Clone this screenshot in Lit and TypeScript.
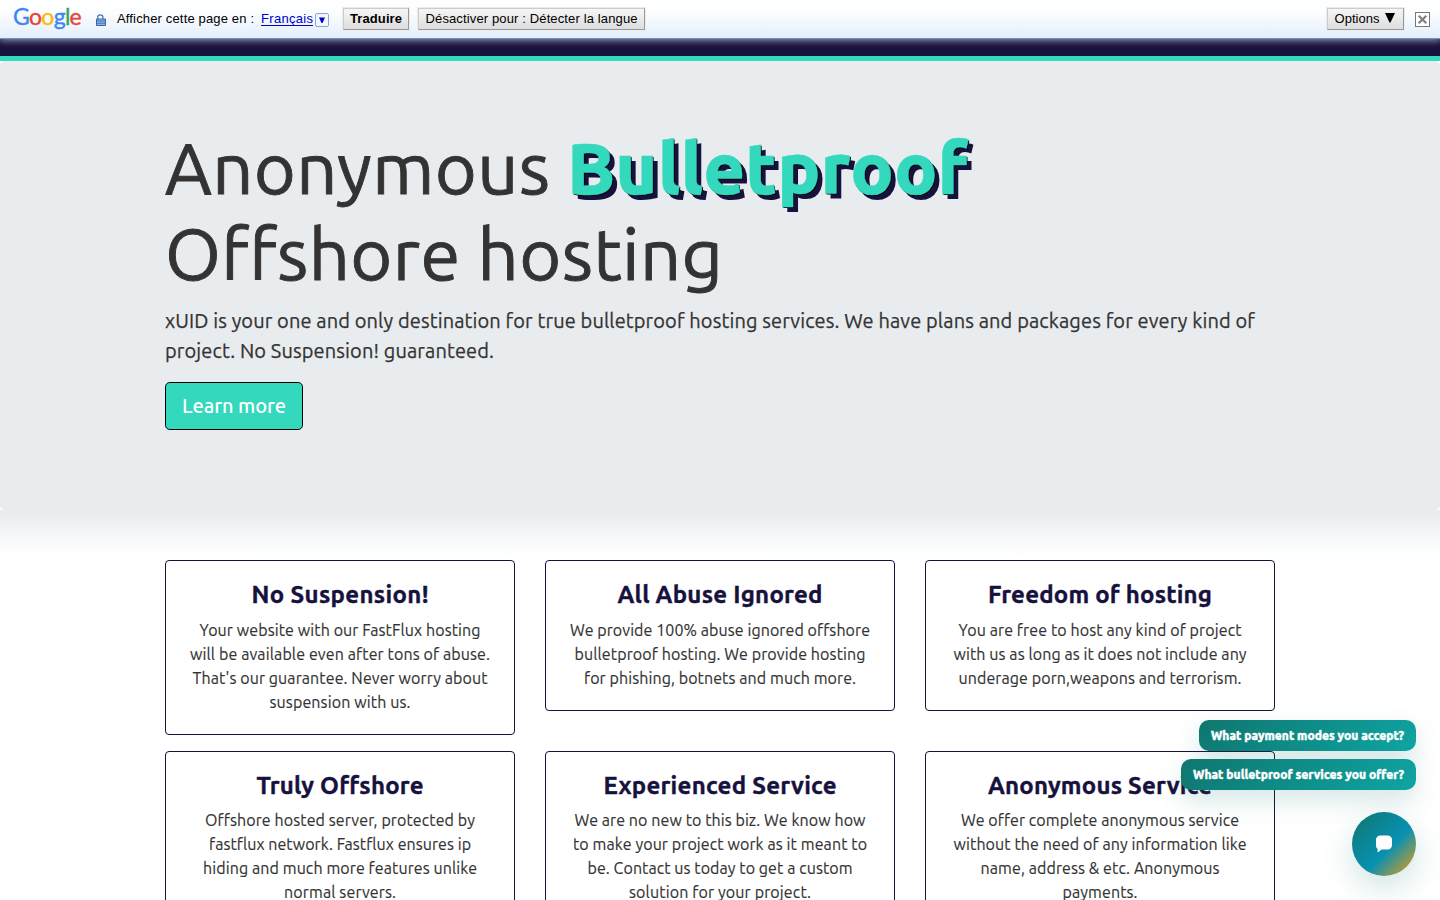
import { LitElement, html, css } from "lit";
import { customElement, property, state } from "lit/decorators.js";

/** A single line of text whose tracking is adjusted so that it spans `w` pixels. */
@customElement("fit-text")
class FitText extends LitElement {
  @property() text = "";
  @property({ type: Number }) w = 0;
  @state() spacing = 0;
  static styles = css`
    :host { display: inline-block; white-space: pre; }
    .box { display: inline-block; }
  `;
  firstUpdated() {
    const span = this.renderRoot.querySelector(".run") as HTMLElement;
    const natural = span.getBoundingClientRect().width;
    this.spacing = (this.w - natural) / Math.max(1, this.text.length - 1);
  }
  render() {
    return html`<span class="box" style="width:${this.w}px"><span class="run" style="letter-spacing:${this.spacing}px">${this.text}</span></span>`;
  }
}

type Line = [string, number];
const fit = (l: Line) => html`<fit-text .text=${l[0]} .w=${l[1]}></fit-text>`;

const cards: { title: Line; lines: Line[] }[] = [
  { title: ["No Suspension!", 177], lines: [["Your website with our FastFlux hosting", 281], ["will be available even after tons of abuse.", 300], ["That's our guarantee. Never worry about", 295], ["suspension with us.", 141]] },
  { title: ["All Abuse Ignored", 205], lines: [["We provide 100% abuse ignored offshore", 300], ["bulletproof hosting. We provide hosting", 291], ["for phishing, botnets and much more.", 272]] },
  { title: ["Freedom of hosting", 224], lines: [["You are free to host any kind of project", 283], ["with us as long as it does not include any", 293], ["underage porn,weapons and terrorism.", 283]] },
  { title: ["Truly Offshore", 167], lines: [["Offshore hosted server, protected by", 270], ["fastflux network. Fastflux ensures ip", 262], ["hiding and much more features unlike", 274], ["normal servers.", 112]] },
  { title: ["Experienced Service", 233], lines: [["We are no new to this biz. We know how", 291], ["to make your project work as it meant to", 294], ["be. Contact us today to get a custom", 265], ["solution for your project.", 182]] },
  { title: ["Anonymous Service", 224], lines: [["We offer complete anonymous service", 278], ["without the need of any information like", 293], ["name, address & etc. Anonymous", 239], ["payments.", 75]] },
];

@customElement("translate-bar")
class TranslateBar extends LitElement {
  static styles = css`
    :host { display: flex; align-items: center; box-sizing: border-box; height: 39px; border-bottom: 1px solid #6b90da; background: linear-gradient(#fff, #fbfdff 35%, #e3eefb); box-shadow: 0 0 8px 1px #a9a9b8; font: 13px "Liberation Sans", sans-serif; color: #000; position: relative; padding: 0 10px 2px 13px; }
    .logo { display: flex; width: 70px; font: 23px/30px Lato, sans-serif; letter-spacing: -0.75px; -webkit-text-stroke: 0.4px; margin-top: -4px; }
    .b { color: #4285f4; } .r { color: #ea4335; } .y { color: #fbbc05; } .g { color: #34a853; }
    .lock { margin: 3px 11px 0 12px; width: 11px; height: 12px; }
    .label { width: 144px; }
    .link { color: #0000cc; box-shadow: 0 1px 0 #0000cc; height: 13px; line-height: 14px; }
    .drop { width: 14px; height: 14px; margin: 4px 14px 0 2px; }
    .btn { display: flex; align-items: center; justify-content: center; box-sizing: border-box; height: 22px; padding-bottom: 2px; margin-top: 2px; border: 1px solid #ccc; border-right-color: #999; border-bottom-color: #999; background: linear-gradient(#f6f6f6, #ddd); box-shadow: 0 0 0 1px #ebebeb; margin-right: 9px; }
    .t { width: 66px; font-weight: bold; }
    .d { width: 227px; }
    .o { width: 77px; margin: 2px 11px 0 auto; gap: 5px; padding-right: 2px; }
    .x { width: 15px; height: 15px; margin-top: 3px; }
  `;
  render() {
    return html`
      <span class="logo"><span class="b">G</span><span class="r">o</span><span class="y">o</span><span class="b">g</span><span class="g">l</span><span class="r">e</span></span>
      <svg class="lock" viewBox="0 0 11 12"><path d="M2.700 5V3.400a2.600 2.600 0 0 1 5.200 0V5" fill="none" stroke="#4777b5" stroke-width="1.3"/><path d="M1.500 5h9v6.500h-9z" fill="#8fb4e3" stroke="#3468ab"/><path d="M2 7h8M2 9.300h8" stroke="#4777b5"/></svg>
      <span class="label">${fit(["Afficher cette page en :", 137])}</span>
      <span class="link">${fit(["Français", 52])}</span>
      <svg class="drop" viewBox="0 0 14 14"><rect x=".5" y=".5" width="13" height="13" rx="1.5" fill="#f2f7fd" stroke="#84a8d8"/><path d="M4 4.500h6L7.500 10h-1z" fill="#0000cc"/></svg>
      <span class="btn t">${fit(["Traduire", 52])}</span>
      <span class="btn d">${fit(["Désactiver pour : Détecter la langue", 212])}</span>
      <span class="btn o">${fit(["Options", 45])}<svg width="10" height="10" viewBox="0 0 10 10"><path d="M0 0h10L5.500 9.500h-1z"/></svg></span>
      <svg class="x" viewBox="0 0 15 15"><rect x=".5" y=".5" width="14" height="14" fill="#fff" stroke="#777"/><path d="M3.700 3.700l7.600 7.600M11.300 3.700l-7.600 7.600" stroke="#808080" stroke-width="2.2"/></svg>
    `;
  }
}

@customElement("app-root")
class AppRoot extends LitElement {
  static styles = css`
    :host { display: block; height: 900px; overflow: hidden; position: relative; background: #fff; color: #333; font-family: Ubuntu, "Noto Sans", sans-serif; font-weight: 400; }
    .nav { height: 17px; background: #16113d; border-bottom: 5px solid #34d8bd; }
    .hero { box-sizing: border-box; height: 448.8px; padding: 64px 165px 0; background: #e8ecef; border-radius: 4.8px; }
    .h1 { margin: 0 0 8px; font-weight: 400; -webkit-text-stroke: 0.9px #333; font-size: 72px; line-height: 86.4px; }
    .row { height: 86.4px; white-space: nowrap; }
    .accent { color: #34d8bd; font-weight: 800; -webkit-text-stroke: 0.5px #34d8bd; margin-left: 17px; text-shadow: 1px 1px #000, 5px 5px #16113d; }
    .lead { font-size: 20px; line-height: 30px; height: 60px; margin: 0 0 16px; -webkit-text-stroke: 0.25px #333; }
    .lead fit-text { display: block; height: 30px; }
    .more { display: flex; align-items: center; justify-content: center; box-sizing: border-box; width: 138px; height: 48px; border: 1px solid #000; border-radius: 4.8px; background: #34d8bd; color: #fff; font-size: 20px; font-weight: 500; line-height: 30px; }
    .fade { height: 50.2px; background: linear-gradient(#e8eaee, #f8fafc 65%, #fff 94%); }
    .grid { display: grid; grid-template-columns: repeat(3, 350px); gap: 16px 30px; padding: 0 165px; align-items: start; }
    .card { box-sizing: border-box; border: 1px solid #16113d; border-radius: 4px; background: #fff; padding: 20px 0; text-align: center; font-size: 16px; line-height: 24px; }
    .line { height: 24px; -webkit-text-stroke: 0.15px #333; }
    .title { margin: 0 0 7.8px; color: #16113d; font-size: 24px; font-weight: 700; -webkit-text-stroke: 0.4px #16113d; line-height: 28.8px; height: 28.8px; }
    .chat { position: absolute; right: 24px; bottom: 24px; display: flex; flex-direction: column; align-items: flex-end; gap: 8px; }
    .ask { display: flex; align-items: center; height: 31px; padding: 0 12px; border-radius: 10px; background: linear-gradient(135deg, #0f766e, #0ea5a4); color: #fff; font-size: 12px; font-weight: 800; -webkit-text-stroke: 0.4px #fff; line-height: 31px; box-shadow: 0 10px 24px rgba(15, 118, 110, 0.18); }
    .fab { display: flex; align-items: center; justify-content: center; width: 64px; height: 64px; margin-top: 14px; border-radius: 50%; background: linear-gradient(135deg, #0f766e, #0891b2 58%, #f59e0b); box-shadow: 0 12px 32px rgba(15, 118, 110, 0.2); }
  `;
  render() {
    return html`
      <translate-bar></translate-bar>
      <div class="nav"></div>
      <section class="hero">
        <h1 class="h1">
          <div class="row">${fit(["Anonymous", 385])}<span class="accent">${fit(["Bulletproof", 401])}</span></div>
          <div class="row">${fit(["Offshore hosting", 558])}</div>
        </h1>
        <div class="lead">
          ${fit(["xUID is your one and only destination for true bulletproof hosting services. We have plans and packages for every kind of", 1090])}
          ${fit(["project. No Suspension! guaranteed.", 329])}
        </div>
        <a class="more">${fit(["Learn more", 104])}</a>
      </section>
      <div class="fade"></div>
      <section class="grid">
        ${cards.map((c) => html`<article class="card"><h4 class="title">${fit(c.title)}</h4>${c.lines.map((l) => html`<div class="line">${fit(l)}</div>`)}</article>`)}
      </section>
      <aside class="chat">
        <span class="ask">${fit(["What payment modes you accept?", 193])}</span>
        <span class="ask">${fit(["What bulletproof services you offer?", 211])}</span>
        <span class="fab"><svg width="18" height="18" viewBox="0 0 18 18"><path d="M5.200 .5h7.600a4.200 4.200 0 0 1 4.200 4.200v5.600a4.200 4.200 0 0 1-4.200 4.200H6.600L2.600 17.600V14A4.200 4.200 0 0 1 1 10.500V4.700A4.200 4.200 0 0 1 5.200 .5z" fill="#fff"/></svg></span>
      </aside>
    `;
  }
}
